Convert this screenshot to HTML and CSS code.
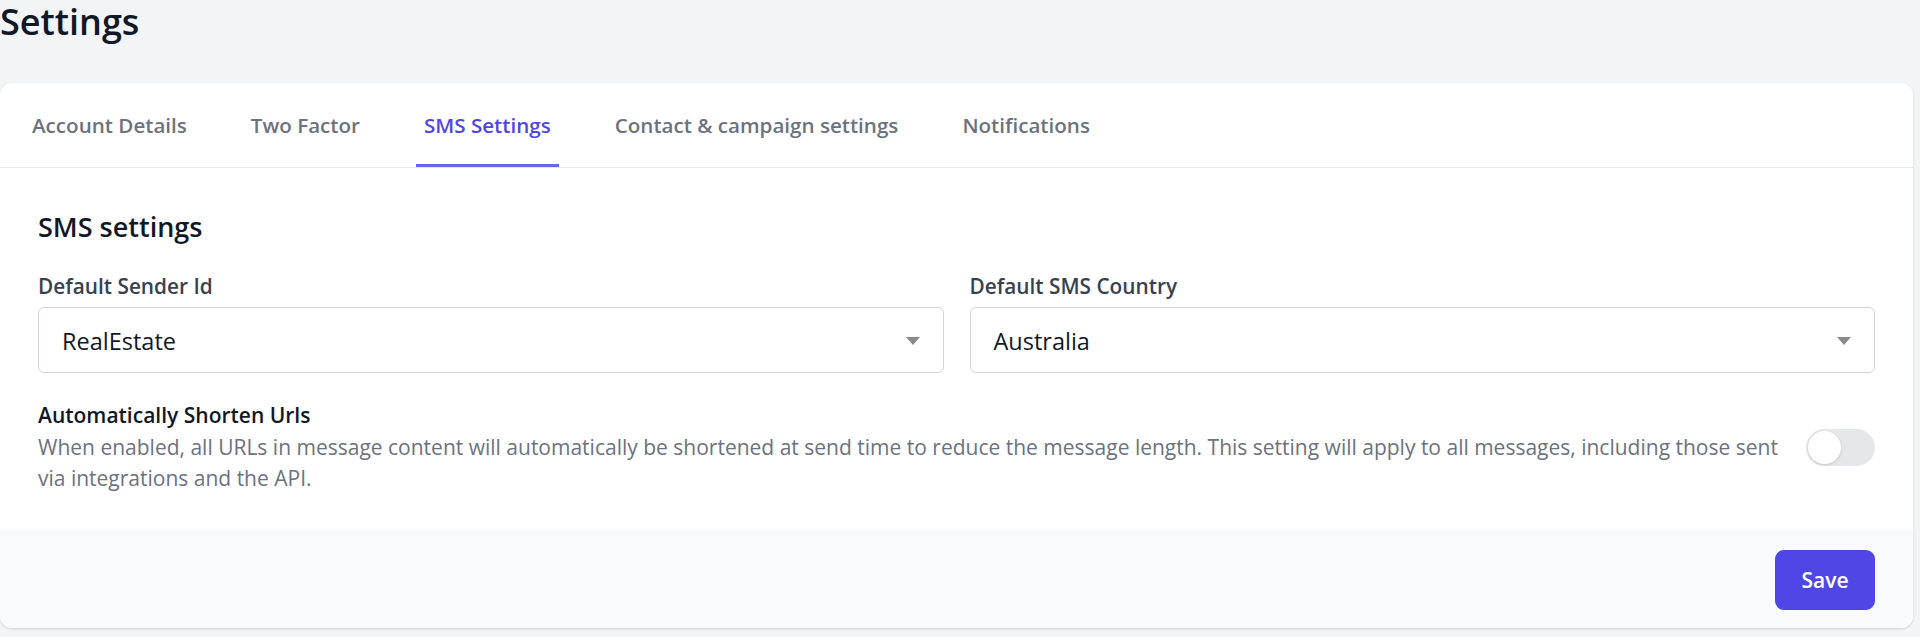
FILE: index.html
```html
<!DOCTYPE html>
<html lang="en">
<head>
    <meta charset="UTF-8">
    <meta name="viewport" content="width=device-width, initial-scale=1.0">
    <title>Settings</title>
    <link rel="stylesheet" href="styles.css">
</head>
<body>

    <main class="page">
        <h1 class="page-title">Settings</h1>

        <div class="card">
            <nav class="tabs">
                <a class="tab" href="#">Account Details</a>
                <a class="tab" href="#">Two Factor</a>
                <a class="tab active" href="#">SMS Settings</a>
                <a class="tab" href="#">Contact &amp; campaign settings</a>
                <a class="tab" href="#">Notifications</a>
            </nav>

            <section class="panel">
                <h2 class="panel-title">SMS settings</h2>

                <div class="field-grid">
                    <div class="field">
                        <label class="field-label">Default Sender Id</label>
                        <div class="select">
                            <span>RealEstate</span>
                            <span class="caret"></span>
                        </div>
                    </div>
                    <div class="field">
                        <label class="field-label">Default SMS Country</label>
                        <div class="select">
                            <span>Australia</span>
                            <span class="caret"></span>
                        </div>
                    </div>
                </div>

                <div class="toggle-row">
                    <div class="toggle-text">
                        <p class="toggle-title">Automatically Shorten Urls</p>
                        <p class="toggle-desc">When enabled, all URLs in message content will automatically be shortened at send time to reduce the message length. This setting will apply to all messages, including those sent via integrations and the API.</p>
                    </div>
                    <button class="switch" type="button"><span class="knob"></span></button>
                </div>
            </section>

            <div class="card-footer">
                <button class="btn-save" type="button">Save</button>
            </div>
        </div>
    </main>

</body>
</html>
```

FILE: styles.css
```css
body {
    margin: 0;
    padding: 0;
    font-family: "Open Sans", "Noto Sans", Arial, sans-serif;
    background-color: #f3f4f6;
    color: #111827;
}

.page {
    padding: 0 7px 9px 0;
}

.page-title {
    margin: 0;
    padding-top: 1px;
    font-size: 36px;
    line-height: 42px;
    font-weight: 600;
    color: #111827;
}

.card {
    margin-top: 40px;
    background-color: #fff;
    border-radius: 12px;
    box-shadow: 0 1px 3px rgba(0, 0, 0, 0.1), 0 1px 2px rgba(0, 0, 0, 0.06);
    overflow: hidden;
}

/* tabs */
.tabs {
    display: flex;
    gap: 48px;
    padding-left: 24px;
    border-bottom: 1px solid #e5e7eb;
}

.tab {
    padding: 27px 8px 24px;
    font-size: 20.6px;
    line-height: 30px;
    font-weight: 600;
    color: #6b7280;
    text-decoration: none;
    border-bottom: 3px solid transparent;
}

.tab.active {
    color: #4f46e5;
    border-bottom-color: #6366f1;
}

/* panel */
.panel {
    padding: 39px 38px 35px;
}

.panel-title {
    margin: 0;
    font-size: 27px;
    line-height: 40px;
    font-weight: 600;
    color: #111827;
}

.field-grid {
    display: grid;
    grid-template-columns: 1fr 1fr;
    gap: 26px;
    margin-top: 24px;
}

.field-label {
    display: block;
    font-size: 20.8px;
    line-height: 30px;
    font-weight: 600;
    color: #374151;
    margin-bottom: 6px;
}

.select {
    display: flex;
    align-items: center;
    justify-content: space-between;
    height: 66px;
    box-sizing: border-box;
    padding: 2px 23px 0 23px;
    border: 1px solid #d1d5db;
    border-radius: 6px;
    font-size: 23.5px;
    color: #111827;
}

.caret {
    width: 0;
    height: 0;
    border-left: 7px solid transparent;
    border-right: 7px solid transparent;
    border-top: 8px solid #8a8a8a;
}

.toggle-row {
    display: flex;
    align-items: center;
    gap: 16px;
    margin-top: 27px;
}

.toggle-text {
    flex: 1;
}

.toggle-title {
    margin: 0;
    font-size: 21px;
    line-height: 31.5px;
    font-weight: 600;
    color: #111827;
}

.toggle-desc {
    margin: 0;
    font-size: 21px;
    line-height: 31.5px;
    color: #6b7280;
}

.switch {
    flex: none;
    position: relative;
    width: 69px;
    height: 37px;
    padding: 0;
    border: none;
    border-radius: 19px;
    background-color: #e5e7eb;
    cursor: pointer;
}

.knob {
    position: absolute;
    top: 2px;
    left: 2px;
    width: 33px;
    height: 33px;
    border-radius: 50%;
    background-color: #fff;
    box-shadow: 0 1px 3px rgba(0, 0, 0, 0.15);
}

/* footer */
.card-footer {
    display: flex;
    justify-content: flex-end;
    padding: 20px 38px 18px;
    background-color: #f9fafb;
}

.btn-save {
    width: 100px;
    height: 60px;
    border: none;
    border-radius: 9px;
    background-color: #4f46e5;
    color: #fff;
    font-family: inherit;
    font-size: 21px;
    font-weight: 600;
    cursor: pointer;
}
```
